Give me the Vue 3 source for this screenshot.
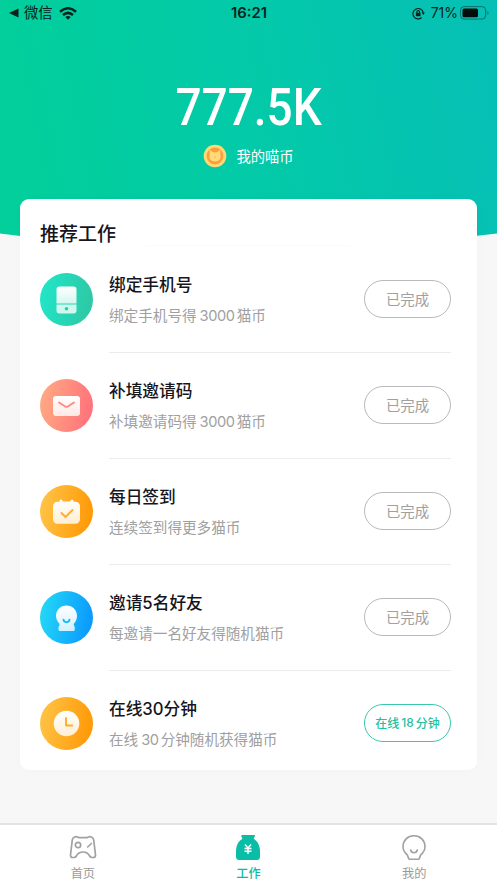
<script setup>
const jobs = [
  { icon: 'phone', title: '绑定手机号', parts: ['绑定手机号得', '3000', '猫币'], action: ['已完成'] },
  { icon: 'mail', title: '补填邀请码', parts: ['补填邀请码得', '3000', '猫币'], action: ['已完成'] },
  { icon: 'calendar', title: '每日签到', parts: ['连续签到得更多猫币'], action: ['已完成'] },
  { icon: 'friend', title: '邀请5名好友', parts: ['每邀请一名好友得随机猫币'], action: ['已完成'] },
  { icon: 'clock', title: '在线30分钟', parts: ['在线', '30', '分钟随机获得猫币'], action: ['在线', '18', '分钟'], active: true },
]
</script>

<template>
  <div class="screen">
    <header class="hero">
      <svg class="hero-bg" viewBox="0 0 497 256" preserveAspectRatio="none" aria-hidden="true">
        <defs>
          <linearGradient id="heroFill" x1="0" y1="0.1" x2="1" y2="0">
            <stop offset="0" stop-color="#02cf9c" />
            <stop offset="0.5" stop-color="#03c9a9" />
            <stop offset="1" stop-color="#06bfb6" />
          </linearGradient>
        </defs>
        <path d="M0 0H497V233.500Q248.500 266 0 233.500Z" fill="url(#heroFill)" />
      </svg>
      <div class="status">
        <div class="status-left">
          <svg width="10" height="10" viewBox="0 0 10 10"><path d="M0 5 9.500 .5V9.500Z" fill="#06231e" /></svg>
          <span class="back">微信</span>
          <svg width="18" height="13" viewBox="0 0 18 13" fill="none" stroke="#06231e" stroke-width="2.500">
            <path d="M1 4.700Q9-2.200 17 4.700" /><path d="M4 8Q9 3.700 14 8" /><path d="M9 12.800 6.300 10Q9 8 11.700 10Z" fill="#06231e" stroke="none" />
          </svg>
        </div>
        <span class="time">16:21</span>
        <div class="status-right">
          <svg width="13" height="13" viewBox="0 0 13 13" fill="none" stroke="#06231e" stroke-width="1.200">
            <path d="M9.700 10.500A5.200 5.200 0 1 1 11.200 5.500" /><path d="M9.600 5.500h3.300l-1.600 2.400Z" fill="#06231e" stroke="none" />
            <path d="M4.900 6V4.800a1.300 1.300 0 0 1 2.600 0V6" /><rect x="3.900" y="5.800" width="4.600" height="3.400" fill="#06231e" stroke="none" />
          </svg>
          <span class="percent">71%</span>
          <svg width="30" height="14" viewBox="0 0 30 14">
            <rect x=".6" y=".6" width="25" height="12.500" rx="3.500" fill="none" stroke="#06231e" stroke-opacity=".5" />
            <rect x="2.500" y="2.500" width="15.500" height="8.700" rx="1.500" fill="#020c0a" />
            <path d="M27.500 4.700q2 2 0 4.400Z" fill="#06231e" fill-opacity=".55" />
          </svg>
        </div>
      </div>
      <div class="amount"><span>777.5K</span></div>
      <div class="coins">
        <svg width="24" height="24" viewBox="0 0 24 24">
          <circle cx="12" cy="12" r="11.300" fill="#ffd974" />
          <circle cx="12" cy="12" r="8.400" fill="#fb9f3c" />
          <path d="M6.800 5.800 10 8.200h4l3.200-2.400.3 8.400q-1.700 3.300-5.500 3.300t-5.500-3.300Z" fill="#ffda78" />
          <path d="M11.200 12.800h1.600l-.8 1.500Z" fill="#f39a36" />
        </svg>
        <span>我的喵币</span>
      </div>
    </header>

    <main class="card">
      <h1>推荐工作</h1>
      <div class="hairline"></div>
      <section v-for="job in jobs" :key="job.icon" class="job">
        <div class="badge" :class="job.icon">
          <svg width="53" height="53" viewBox="0 0 53 53">
            <defs>
              <linearGradient :id="'glyph-' + job.icon" x1="0" y1="0" x2="0" y2="1">
                <stop offset="0" stop-color="#fff" /><stop offset="1" stop-color="#fff" stop-opacity=".8" />
              </linearGradient>
            </defs>
            <g v-if="job.icon === 'phone'">
              <path d="M19.500 13.500h14a3 3 0 0 1 3 3V30.500H16.500V16.500a3 3 0 0 1 3-3Z" fill="url(#glyph-phone)" />
              <path d="M16.500 31.500h20v6a3 3 0 0 1-3 3h-14a3 3 0 0 1-3-3Z" fill="#d2f8ee" />
              <circle cx="26.500" cy="35.800" r="1.800" fill="#27cfac" />
            </g>
            <g v-else-if="job.icon === 'mail'">
              <rect x="13" y="17" width="27" height="20" rx="3" fill="url(#glyph-mail)" />
              <path d="m19 23.500 6.200 4q1.300.8 2.600 0l6.200-4" class="line pink" />
            </g>
            <g v-else-if="job.icon === 'calendar'">
              <path d="M19.500 17v-1a1.500 1.500 0 0 1 3 0V16.500h8v-.5a1.500 1.500 0 0 1 3 0v.7h2a4.500 4.500 0 0 1 4.500 4.500v13a4.500 4.500 0 0 1-4.500 4.500h-18a4.500 4.500 0 0 1-4.500-4.500v-13a4.500 4.500 0 0 1 4.500-4.500h2Z" fill="url(#glyph-calendar)" />
              <path d="m21.500 28 4 4 7-7" class="line orange" />
            </g>
            <g v-else-if="job.icon === 'friend'">
              <path d="M26.500 14.500c6 0 10.500 4.500 10.500 10.300 0 3.400-1.200 6.100-3.200 8v1.200c.3 1 1 1.500 1 3v1.500c0 .9-.6 1.500-1.500 1.500H20c-.9 0-1.500-.6-1.500-1.500V37c0-1.500.7-2 1-3v-1.200c-2-1.900-3.500-4.600-3.500-8C16 19 20.500 14.500 26.500 14.500Z" fill="url(#glyph-friend)" />
              <path d="M23.500 28.700q.4 2.500 3 2.500t3-2.500" class="line blue" />
            </g>
            <g v-else>
              <circle cx="26.500" cy="26.500" r="12.800" fill="url(#glyph-clock)" />
              <path d="M26 21v7.500h6.200" class="line orange" />
            </g>
          </svg>
        </div>
        <div class="detail">
          <div class="copy">
            <h2>{{ job.title }}</h2>
            <p><span v-for="part in job.parts" :key="part" :class="{ digits: /^\d+$/.test(part) }">{{ part }}</span></p>
          </div>
          <button type="button" :class="{ active: job.active }">
            <span v-for="part in job.action" :key="part">{{ part }}</span>
          </button>
        </div>
      </section>
    </main>

    <nav class="tabs">
      <a class="tab">
        <svg width="28" height="26" viewBox="0 0 28 26" fill="none" stroke="#a1a1a1" stroke-width="1.700" stroke-linecap="round" stroke-linejoin="round">
          <path d="M5.300 2.300q1.500-1 3.300-.3l1 .6h8.800l1-.6q1.800-.7 3.300.3 1.700.8 2 2.500l1.800 15.200q0 2.500-2 2.500h-1.500q-1.500 0-2.300-1.500-2.200-4-6.700-4t-6.700 4q-.8 1.500-2.300 1.500H3.500q-2 0-2-2.500L3.300 4.800q.3-1.700 2-2.500Z" />
          <circle cx="9" cy="10" r="2.700" /><path d="m18.700 12 3.700-3.500" />
        </svg>
        <span>首页</span>
      </a>
      <a class="tab current">
        <svg width="28" height="26" viewBox="0 0 28 26">
          <path d="M8.500 0h11.500a1 1 0 0 1 .8 1.500l-1.200 2.200q5.900 3.300 6.400 11.300v6.500q0 3.500-3.500 3.500h-17Q2 25 2 21.500V15q.5-8 6.400-11.300L7.400 1.500A1 1 0 0 1 8.500 0Z" fill="#0abda6" />
          <path d="m11 9.500 3 3.500 3-3.500M10.500 13.500h7M10.500 16.300h7M14 13v6" fill="none" stroke="#fff" stroke-width="1.500" />
        </svg>
        <span>工作</span>
      </a>
      <a class="tab">
        <svg width="28" height="26" viewBox="0 0 28 26" fill="none" stroke="#a1a1a1" stroke-width="1.600" stroke-linecap="round" stroke-linejoin="round">
          <path d="M14 .8C20.300.8 25 5.400 25 11.600c0 4.200-2 6.500-4.300 8.300l-1.300 3.500q-.3.800-1.200.8H9.800q-.9 0-1.200-.8l-1.300-3.500C5 18.100 3 15.800 3 11.600 3 5.400 7.700.8 14 .8Z" />
          <path d="M10.700 15q.6 2.700 3.300 2.700t3.300-2.700" />
        </svg>
        <span>我的</span>
      </a>
    </nav>
  </div>
</template>

<style>
body { margin: 0; }
</style>

<style scoped>
.screen { position: relative; display: flex; flex-direction: column; width: 497px; height: 883px; overflow: hidden; background: #f7f7f7; font-family: Inter, "Noto Sans CJK SC", sans-serif; }
.hero { position: relative; height: 199px; flex: none; }
.hero-bg { position: absolute; top: 0; left: 0; width: 497px; height: 256px; }
.status { position: relative; display: grid; grid-template-columns: 1fr auto 1fr; align-items: center; height: 26px; box-sizing: border-box; padding: 0 7px 0 9px; color: #06231e; font-size: 14px; line-height: 20px; }
.status-left, .status-right { display: flex; align-items: center; }
.status-left { gap: 5px; }
.back { margin-right: 1px; font-size: 14.300px; }
.status-right { justify-content: flex-end; gap: 2px; }
.percent { margin-left: 4px; font-size: 14px; }
.time { padding-right: 1px; font-weight: 600; font-size: 14.800px; }
.amount { position: relative; display: flex; justify-content: center; margin-top: 50px; height: 62px; color: #fff; font: 500 52.500px/62px Roboto, sans-serif; }
.amount span { transform: scaleX(.875); }
.coins { position: relative; display: flex; align-items: center; justify-content: center; gap: 9px; height: 24px; margin-top: 6px; color: #fff; font-size: 14.300px; line-height: 24px; }
.coins span { padding-top: 1px; }
.card { position: relative; box-sizing: border-box; width: 457px; height: 571px; margin: 0 auto; padding: 0 26px 0 20px; border-radius: 9px; background: #fff; box-shadow: 0 0 12px rgba(0, 0, 0, .02); }
h1, h2, p { margin: 0; }
h1 { height: 46px; box-sizing: border-box; padding-top: 22px; font-size: 19px; line-height: 28px; font-weight: 500; color: #15151d; }
.hairline { width: 206px; height: 1px; margin: 0 0 1px 105px; background: #fafafa; }
.job { display: flex; gap: 16px; height: 106px; }
.badge { width: 53px; height: 53px; margin-top: 26px; border-radius: 50%; flex: none; }
.badge svg { display: block; }
.phone { background: linear-gradient(100deg, #1fe8cb, #30c5a1); }
.mail { background: linear-gradient(100deg, #ffad83, #ff6d7b); }
.calendar, .clock { background: linear-gradient(100deg, #ffc64a, #ff9500); }
.friend { background: linear-gradient(100deg, #25dcf5, #0893ff); }
.line { fill: none; stroke-width: 1.900; stroke-linecap: round; stroke-linejoin: round; }
.pink { stroke: #fd8c80; }
.orange { stroke: #ffad2c; }
.blue { stroke: #17baf9; }
.detail { flex: 1; display: flex; justify-content: space-between; border-bottom: 1px solid #ececec; }
.job:last-child .detail { border-bottom: 0; }
.copy { padding-top: 25px; white-space: nowrap; }
h2 { font-size: 16.700px; line-height: 26px; font-weight: 500; color: #15151d; }
p { display: flex; gap: 3px; margin-top: 6px; font-size: 14.600px; line-height: 24px; color: #a0a0a0; }
.digits { letter-spacing: -.4px; }
p .digits + span { margin-left: -1px; }
button { display: flex; align-items: center; justify-content: center; gap: 2px; box-sizing: border-box; width: 87px; height: 38px; margin-top: 33px; padding: 0 0 2px; border: 1px solid #b9b9b9; border-radius: 19px; background: #fff; color: #a0a0a0; font-family: inherit; font-size: 14.400px; white-space: nowrap; }
button.active { padding-bottom: 1px; border-color: #3ac8ad; color: #23bfa2; font-size: 12px; font-weight: 500; }
.tabs { display: grid; grid-template-columns: repeat(3, 1fr); height: 60px; box-sizing: border-box; margin-top: auto; border-top: 2px solid #e3e3e3; background: #fff; }
.tab { position: relative; display: flex; flex-direction: column; align-items: center; padding-top: 10px; color: #999; font-size: 12.200px; line-height: 18px; }
.tab span { margin-top: 4px; }
.tab.current { color: #0abda6; font-weight: 500; }
</style>
